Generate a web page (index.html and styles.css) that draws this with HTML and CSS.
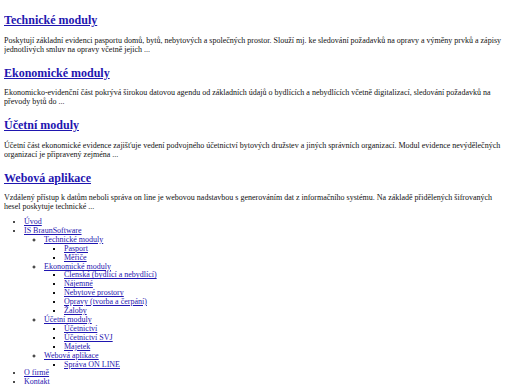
FILE: index.html
```html
<!DOCTYPE html>
<html lang="cs">
<head>
    <meta charset="UTF-8">
    <meta name="viewport" content="width=device-width, initial-scale=1.0">
    <title>BraunSoftware</title>
    <link rel="stylesheet" href="styles.css">
</head>
<body>
    <div class="moduly">
        <h2><a href="#">Technické moduly</a></h2>
        <p>Poskytují základní evidenci pasportu domů, bytů, nebytových a společných prostor. Slouží mj. ke sledování požadavků na opravy a výměny prvků a zápisy jednotlivých smluv na opravy včetně jejich ...</p>

        <h2><a href="#">Ekonomické moduly</a></h2>
        <p>Ekonomicko-evidenční část pokrývá širokou datovou agendu od základních údajů o bydlících a nebydlících včetně digitalizací, sledování požadavků na převody bytů do ...</p>

        <h2><a href="#">Účetní moduly</a></h2>
        <p>Účetní část ekonomické evidence zajišťuje vedení podvojného účetnictví bytových družstev a jiných správních organizací. Modul evidence nevýdělečných organizací je připravený zejména ...</p>

        <h2><a href="#">Webová aplikace</a></h2>
        <p>Vzdálený přístup k datům neboli správa on line je webovou nadstavbou s generováním dat z informačního systému. Na základě přidělených šifrovaných hesel poskytuje technické ...</p>
    </div>

    <ul class="menu">
        <li><a href="#">Úvod</a></li>
        <li><a href="#">IS BraunSoftware</a>
            <ul>
                <li><a href="#">Technické moduly</a>
                    <ul>
                        <li><a href="#">Pasport</a></li>
                        <li><a href="#">Měřiče</a></li>
                    </ul>
                </li>
                <li><a href="#">Ekonomické moduly</a>
                    <ul>
                        <li><a href="#">Členská (bydlící a nebydlící)</a></li>
                        <li><a href="#">Nájemné</a></li>
                        <li><a href="#">Nebytové prostory</a></li>
                        <li><a href="#">Opravy (tvorba a čerpání)</a></li>
                        <li><a href="#">Žaloby</a></li>
                    </ul>
                </li>
                <li><a href="#">Účetní moduly</a>
                    <ul>
                        <li><a href="#">Účetnictví</a></li>
                        <li><a href="#">Účetnictví SVJ</a></li>
                        <li><a href="#">Majetek</a></li>
                    </ul>
                </li>
                <li><a href="#">Webová aplikace</a>
                    <ul>
                        <li><a href="#">Správa ON LINE</a></li>
                    </ul>
                </li>
            </ul>
        </li>
        <li><a href="#">O firmě</a></li>
        <li><a href="#">Kontakt</a></li>
    </ul>
</body>
</html>
```

FILE: styles.css
```css
body {
    margin: 4px;
    font-family: 'Liberation Serif', 'Times New Roman', serif;
    font-size: 8px;
    color: #111;
}

a {
    color: #1f16b0;
    text-decoration: underline;
}

h2 {
    font-size: 12px;
    line-height: 14px;
    font-weight: bold;
    margin: 12px 0 8.5px;
}

.moduly h2:first-child {
    margin-top: 9px;
}

p {
    line-height: 9px;
    margin: 0 0 7px;
}

.menu {
    margin: 7px 0 0;
    padding-left: 20px;
    list-style: disc;
    line-height: 8.9px;
}

.menu ul {
    margin: 0;
    padding-left: 20px;
    list-style: circle;
}

.menu ul ul {
    list-style: square;
}
```
